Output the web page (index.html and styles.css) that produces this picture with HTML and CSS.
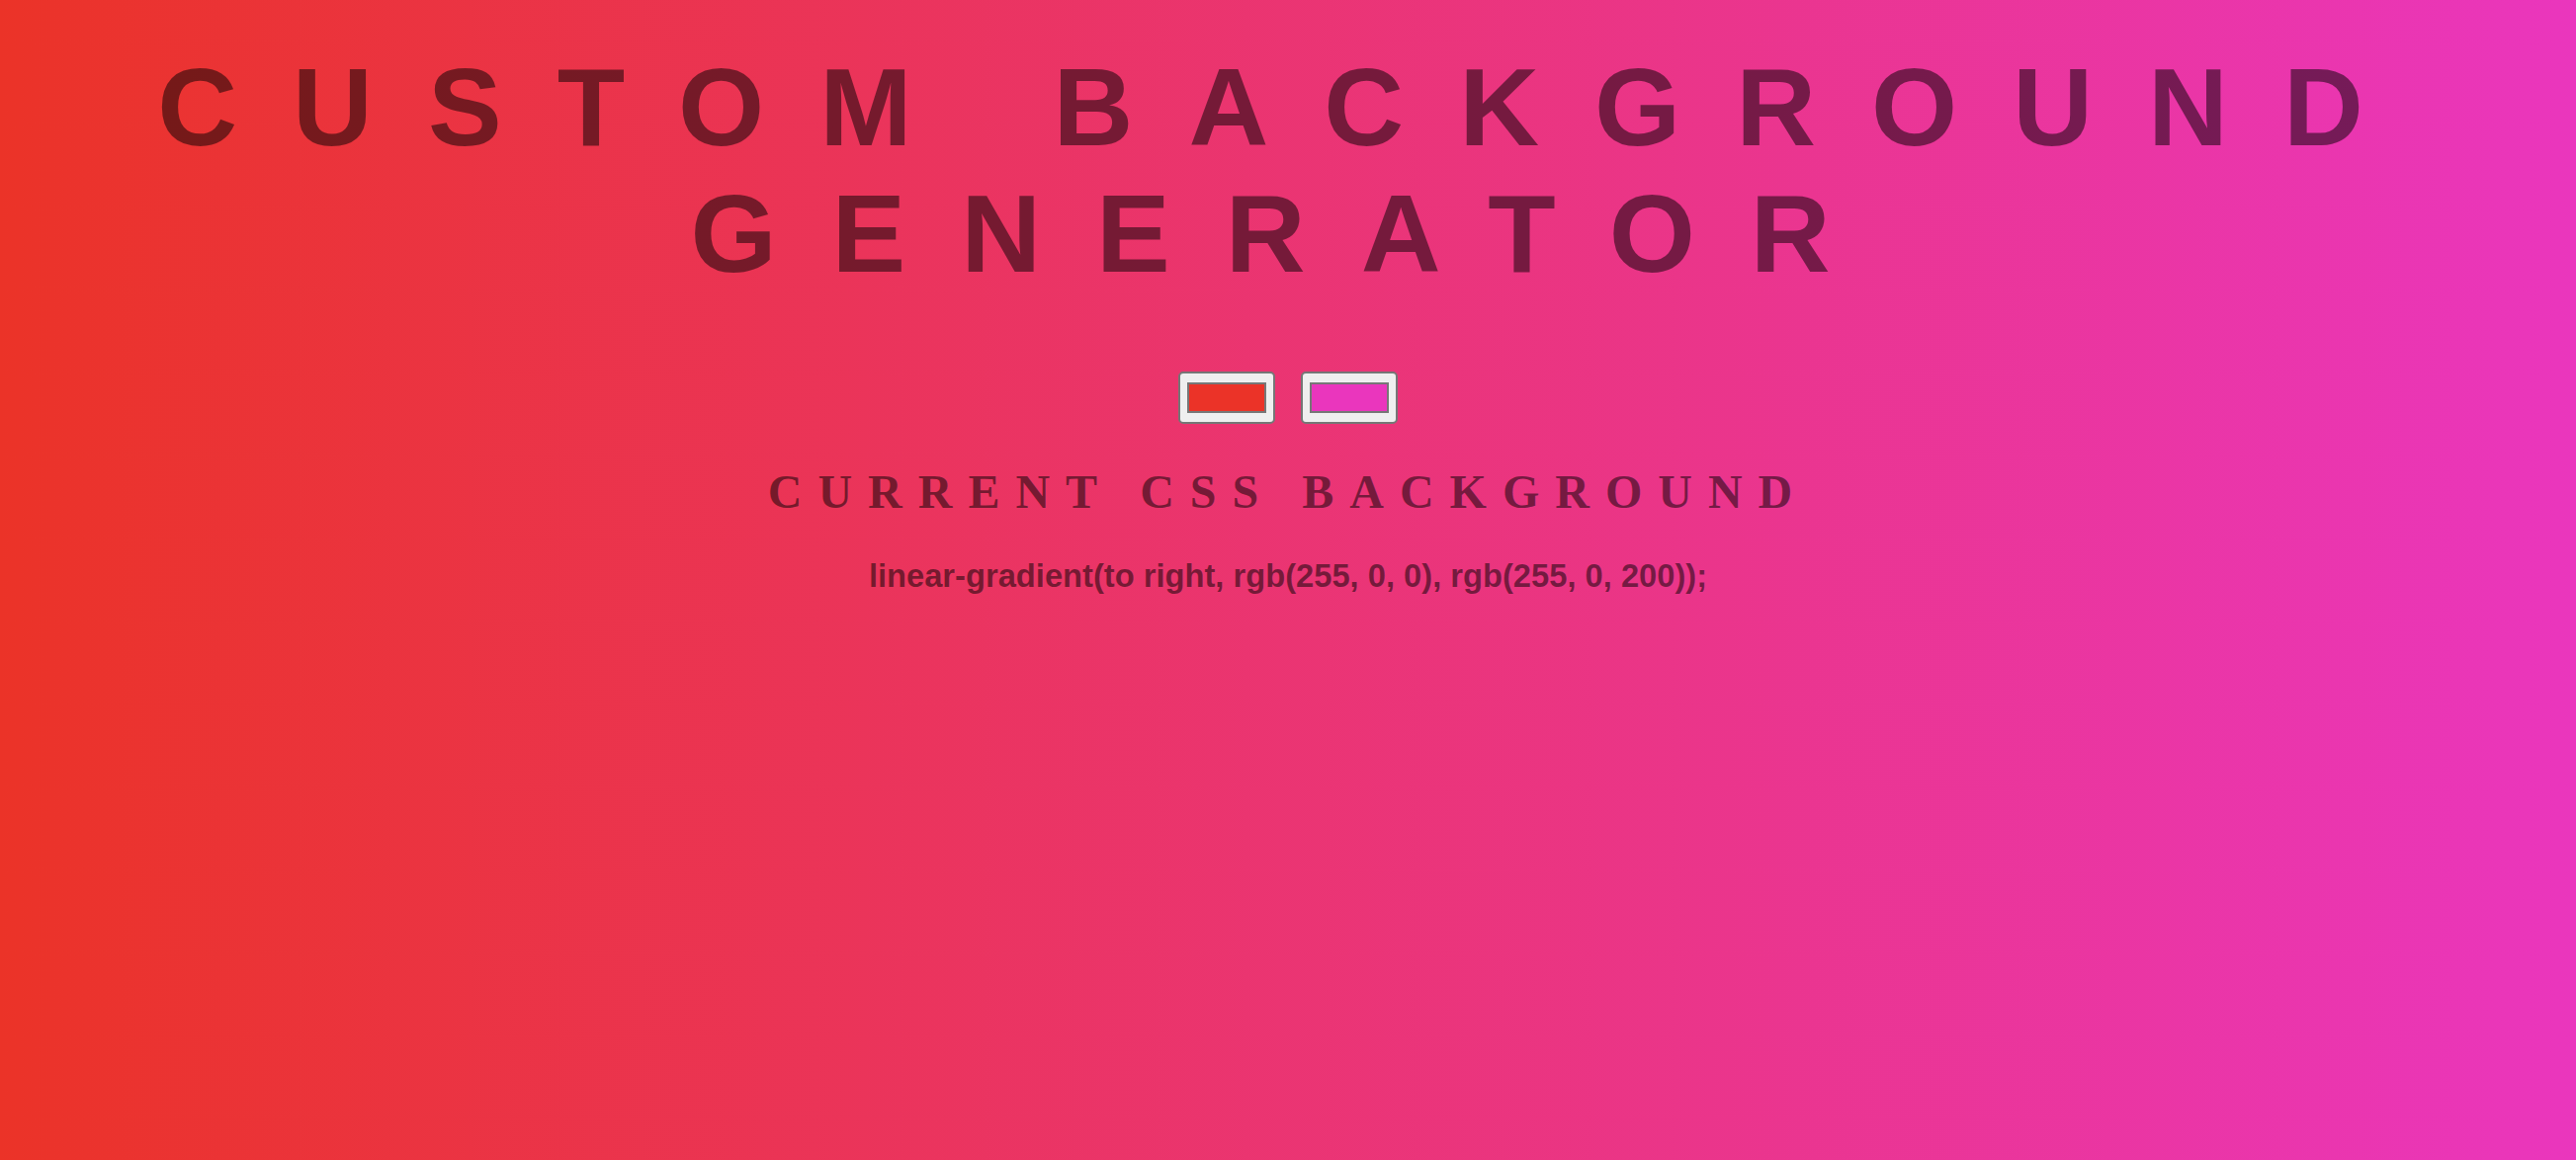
FILE: index.html
```html
<!DOCTYPE html>
<html lang="en">
<head>
<meta charset="utf-8">
<title>Custom Background Generator</title>
<link rel="stylesheet" href="styles.css">
</head>
<body>
  <h1 class="title">Custom Background Generator</h1>
  <div class="pickers">
    <input class="swatch" type="color" name="color1" value="#eb3328">
    <input class="swatch" type="color" name="color2" value="#ea36bd">
  </div>
  <h2 class="subtitle">Current CSS Background</h2>
  <p class="css-output">linear-gradient(to right, rgb(255, 0, 0), rgb(255, 0, 200));</p>
</body>
</html>
```
FILE: styles.css
```css
html {
  min-height: 100%;
}

body {
  margin: 0;
  min-height: 100vh;
  background: linear-gradient(to right, #eb3328, #ea36bd);
  color: rgba(0, 0, 0, 0.5);
  text-align: center;
  font-family: "Liberation Sans", Arial, sans-serif;
}

.title {
  margin: 45px 0 0;
  font-family: "Liberation Sans", Arial, sans-serif;
  font-weight: 700;
  font-size: 112px;
  line-height: 128px;
  letter-spacing: 56px;
  text-transform: uppercase;
}

.pickers {
  display: flex;
  justify-content: center;
  gap: 26px;
  margin-top: 75px;
}

.swatch {
  -webkit-appearance: none;
  appearance: none;
  box-sizing: border-box;
  flex: 0 0 98px;
  width: 98px;
  height: 53px;
  margin: 0;
  padding: 9px 7px;
  border: 2px solid #767676;
  border-radius: 5px;
  background: #efefef;
  cursor: pointer;
}

.swatch::-webkit-color-swatch-wrapper {
  padding: 0;
}

.swatch::-webkit-color-swatch {
  border: 2px solid #777777;
  border-radius: 0;
}

.subtitle {
  margin: 41px 0 0;
  font-family: "Liberation Serif", "Times New Roman", serif;
  font-weight: 700;
  font-size: 48px;
  line-height: 56px;
  letter-spacing: 16px;
  text-transform: uppercase;
}

.css-output {
  margin: 37px 0 0;
  font-family: "Liberation Sans", Arial, sans-serif;
  font-weight: 700;
  font-size: 32.7px;
  line-height: 40px;
}
```
